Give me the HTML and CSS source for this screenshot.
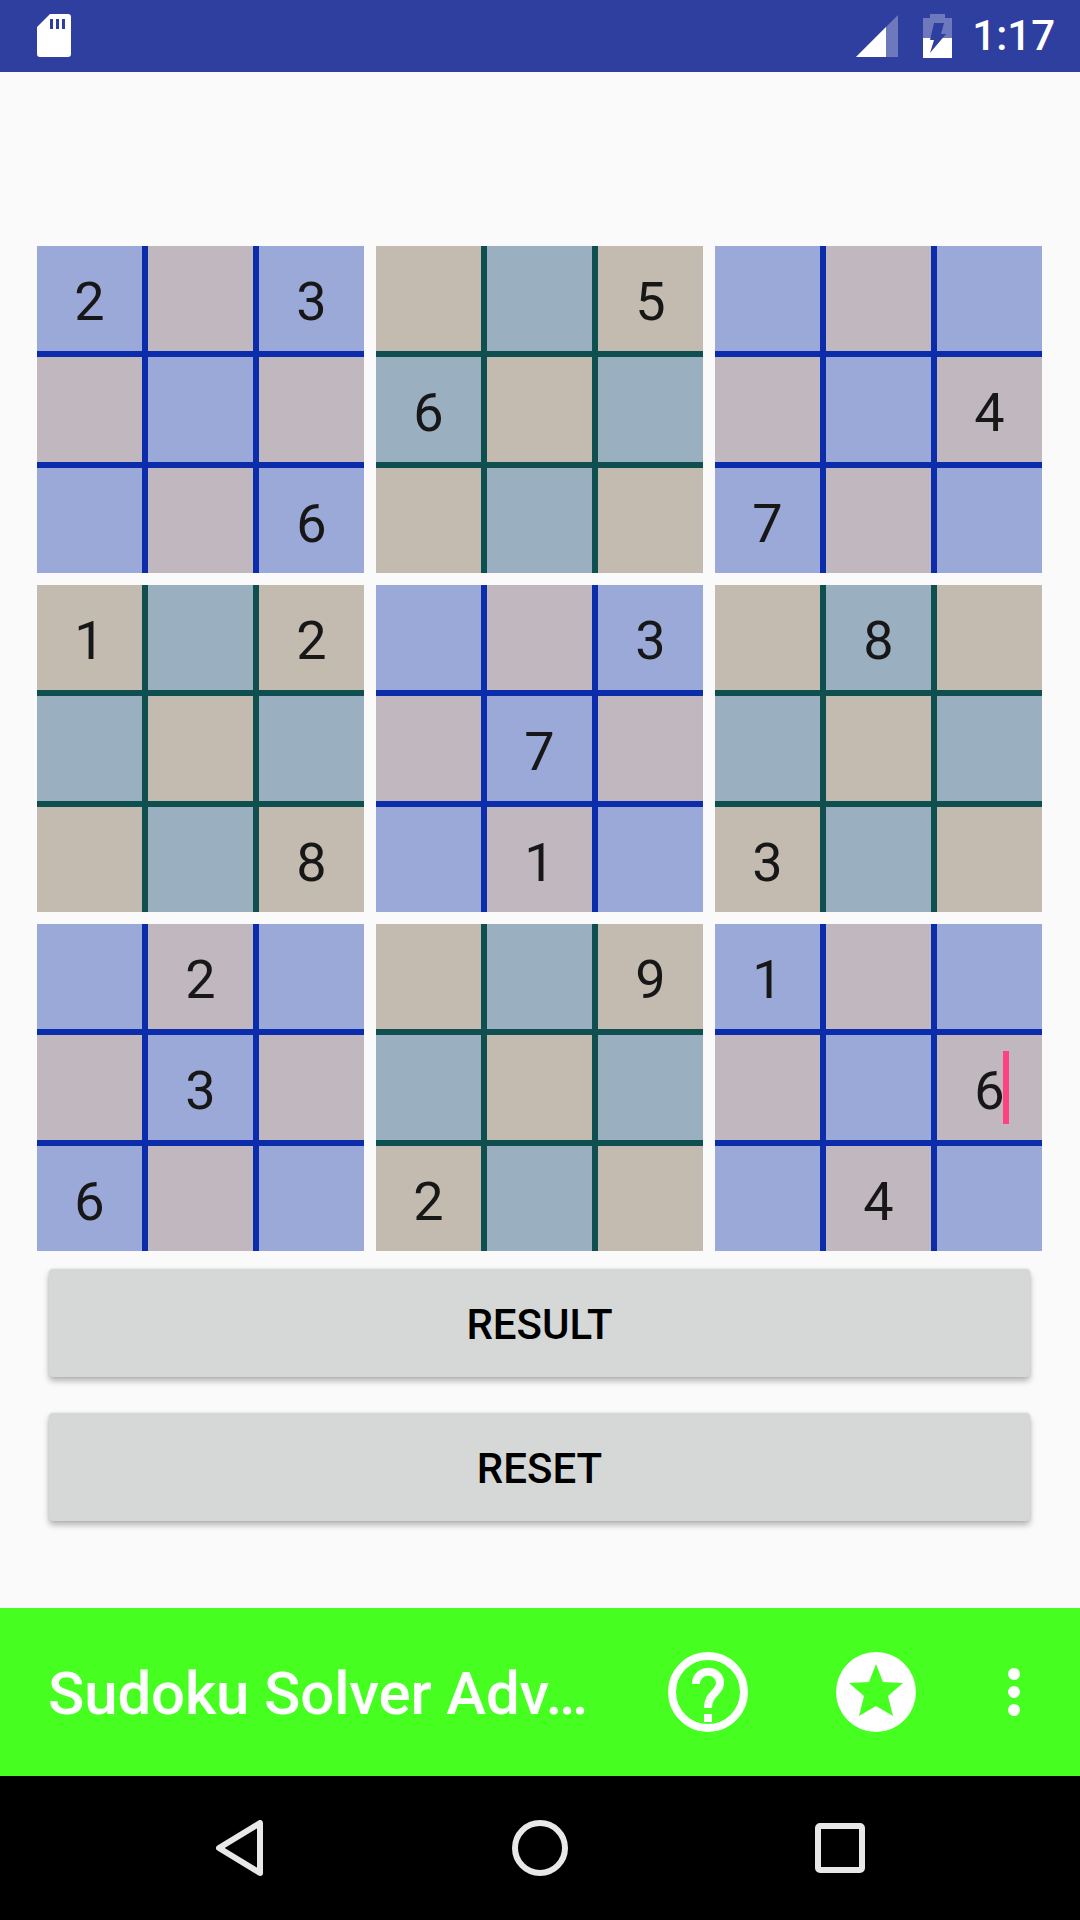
FILE: index.html
```html
<!DOCTYPE html>
<html lang="en">
<head>
    <meta charset="UTF-8">
    <meta name="viewport" content="width=device-width, initial-scale=1.0">
    <title>Sudoku Solver</title>
    <link rel="stylesheet" href="styles.css">
</head>
<body>
    <div class="status-bar">
        <svg class="sd-icon" width="34" height="43" viewBox="0 0 34 43">
            <path fill="#fff" fill-rule="evenodd" d="M13 0H31a3 3 0 0 1 3 3V40a3 3 0 0 1-3 3H3a3 3 0 0 1-3-3V13ZM13 5V15H16V5ZM19 5V15H22V5ZM25 5V15H28V5Z"/>
        </svg>
        <div class="status-right">
            <svg width="42" height="42" viewBox="0 0 42 42">
                <path fill="#fff" fill-opacity="0.3" d="M42 0V42H0Z"/>
                <path fill="#fff" d="M30 12V42H0Z"/>
            </svg>
            <svg class="battery" width="29" height="44" viewBox="0 0 29 44">
                <path fill="#fff" fill-opacity="0.3" d="M7 0H22V4H29V24H0V4H7Z"/>
                <path fill="#fff" d="M0 24H29V44H0Z"/>
                <path fill="#2e3f9f" d="M11 9H21L18 20H23L7 39L11 26H7Z"/>
            </svg>
            <span class="clock">1:17</span>
        </div>
    </div>

    <main class="content">
        <div class="board">
            <div class="block block-blue">
                <div class="cell">2</div><div class="cell"></div><div class="cell">3</div>
                <div class="cell"></div><div class="cell"></div><div class="cell"></div>
                <div class="cell"></div><div class="cell"></div><div class="cell">6</div>
            </div>
            <div class="block block-teal">
                <div class="cell"></div><div class="cell"></div><div class="cell">5</div>
                <div class="cell">6</div><div class="cell"></div><div class="cell"></div>
                <div class="cell"></div><div class="cell"></div><div class="cell"></div>
            </div>
            <div class="block block-blue">
                <div class="cell"></div><div class="cell"></div><div class="cell"></div>
                <div class="cell"></div><div class="cell"></div><div class="cell">4</div>
                <div class="cell">7</div><div class="cell"></div><div class="cell"></div>
            </div>
            <div class="block block-teal">
                <div class="cell">1</div><div class="cell"></div><div class="cell">2</div>
                <div class="cell"></div><div class="cell"></div><div class="cell"></div>
                <div class="cell"></div><div class="cell"></div><div class="cell">8</div>
            </div>
            <div class="block block-blue">
                <div class="cell"></div><div class="cell"></div><div class="cell">3</div>
                <div class="cell"></div><div class="cell">7</div><div class="cell"></div>
                <div class="cell"></div><div class="cell">1</div><div class="cell"></div>
            </div>
            <div class="block block-teal">
                <div class="cell"></div><div class="cell">8</div><div class="cell"></div>
                <div class="cell"></div><div class="cell"></div><div class="cell"></div>
                <div class="cell">3</div><div class="cell"></div><div class="cell"></div>
            </div>
            <div class="block block-blue">
                <div class="cell"></div><div class="cell">2</div><div class="cell"></div>
                <div class="cell"></div><div class="cell">3</div><div class="cell"></div>
                <div class="cell">6</div><div class="cell"></div><div class="cell"></div>
            </div>
            <div class="block block-teal">
                <div class="cell"></div><div class="cell"></div><div class="cell">9</div>
                <div class="cell"></div><div class="cell"></div><div class="cell"></div>
                <div class="cell">2</div><div class="cell"></div><div class="cell"></div>
            </div>
            <div class="block block-blue">
                <div class="cell">1</div><div class="cell"></div><div class="cell"></div>
                <div class="cell"></div><div class="cell"></div><div class="cell"><span class="focused">6<i class="caret"></i></span></div>
                <div class="cell"></div><div class="cell">4</div><div class="cell"></div>
            </div>
        </div>

        <div class="actions">
            <button class="action-btn">RESULT</button>
            <button class="action-btn">RESET</button>
        </div>
    </main>

    <header class="app-bar">
        <span class="app-title">Sudoku Solver Adv…</span>
        <svg class="help-icon" width="80" height="80" viewBox="0 0 80 80">
            <circle cx="40" cy="40" r="36" fill="none" stroke="#fff" stroke-width="8"/>
            <path fill="none" stroke="#fff" stroke-width="8" d="M28 32C28 16 52 16 52 31C52 41 40 41 40 56"/>
            <rect x="36" y="62" width="8" height="8" fill="#fff"/>
        </svg>
        <svg class="star-icon" width="80" height="80" viewBox="0 0 80 80">
            <circle cx="40" cy="40" r="40" fill="#fff"/>
            <path fill="#46ff20" d="M40 12L47 30L67 31L52 44L57 64L40 54L23 64L28 44L13 31L33 30Z"/>
        </svg>
        <div class="more-icon"><i></i><i></i><i></i></div>
    </header>

    <nav class="nav-bar">
        <svg class="nav-back" width="48" height="56" viewBox="0 0 48 56">
            <path fill="none" stroke="#e8e8e8" stroke-width="6" stroke-linejoin="round" d="M44 3V53L3 28Z"/>
        </svg>
        <svg class="nav-home" width="56" height="56" viewBox="0 0 56 56">
            <circle cx="28" cy="28" r="25" fill="none" stroke="#e8e8e8" stroke-width="6"/>
        </svg>
        <svg class="nav-recent" width="50" height="50" viewBox="0 0 50 50">
            <rect x="3" y="3" width="44" height="44" rx="2" fill="none" stroke="#e8e8e8" stroke-width="6"/>
        </svg>
    </nav>
</body>
</html>
```

FILE: styles.css
```css
* {
    box-sizing: border-box;
}

body {
    font-family: Roboto, sans-serif;
    background-color: #fafafa;
    margin: 0;
    padding: 0;
    width: 1080px;
    height: 1920px;
    display: flex;
    flex-direction: column;
    overflow: hidden;
}

.status-bar {
    height: 72px;
    background-color: #2e3f9f;
    display: flex;
    align-items: flex-start;
    justify-content: space-between;
    padding: 14px 25px 0 37px;
    flex-shrink: 0;
}

.status-right {
    display: flex;
    align-items: flex-start;
    padding-top: 1px;
}

.battery {
    margin-left: 25px;
    margin-top: -1px;
}

.clock {
    margin-left: 20px;
    font-size: 42px;
    font-weight: 500;
    line-height: 40px;
    margin-top: 1px;
    color: #fff;
}

.content {
    flex: 1;
    padding: 174px 0 0 37px;
}

.board {
    display: grid;
    grid-template-columns: repeat(3, 327px);
    gap: 12px;
}

.block {
    display: grid;
    grid-template-columns: repeat(3, 105px);
    grid-auto-rows: 105px;
    gap: 6px;
}

.block-blue {
    background-color: #0b2dab;
}

.block-teal {
    background-color: #0f4f4f;
}

.cell {
    font-size: 54px;
    line-height: 111px;
    text-align: center;
    color: #171717;
}

.block-blue .cell:nth-child(odd) {
    background-color: #9ba9d9;
}

.block-blue .cell:nth-child(even) {
    background-color: #c1b7bf;
}

.block-teal .cell:nth-child(odd) {
    background-color: #c3bbaf;
}

.block-teal .cell:nth-child(even) {
    background-color: #9aafc0;
}

.focused {
    position: relative;
}

.caret {
    position: absolute;
    left: 29px;
    top: -8px;
    width: 6px;
    height: 73px;
    background-color: #ff4081;
}

.actions {
    display: flex;
    flex-direction: column;
    gap: 36px;
    margin: 18px 0 0 12px;
    width: 981px;
}

.action-btn {
    height: 108px;
    border: none;
    border-radius: 4px;
    background-color: #d6d8d8;
    box-shadow: 0 4px 6px rgba(0, 0, 0, 0.28), 0 0 3px rgba(0, 0, 0, 0.1);
    font-family: Roboto, sans-serif;
    font-size: 42px;
    font-weight: 500;
    color: #000;
    padding: 2px 0 0;
}

.app-bar {
    height: 168px;
    background-color: #46ff20;
    display: flex;
    align-items: center;
    padding-left: 48px;
    flex-shrink: 0;
}

.app-title {
    width: 620px;
    padding-top: 2px;
    font-size: 60px;
    font-weight: 500;
    letter-spacing: -0.15px;
    color: #fff;
    white-space: nowrap;
}

.star-icon {
    margin-left: 88px;
}

.more-icon {
    margin-left: 92px;
    display: flex;
    flex-direction: column;
    gap: 6px;
}

.more-icon i {
    display: block;
    width: 12px;
    height: 12px;
    border-radius: 50%;
    background-color: #fff;
}

.nav-bar {
    height: 144px;
    background-color: #000;
    flex-shrink: 0;
    display: flex;
    align-items: center;
    padding-left: 216px;
}

.nav-home {
    margin-left: 248px;
}

.nav-recent {
    margin-left: 247px;
}
```
